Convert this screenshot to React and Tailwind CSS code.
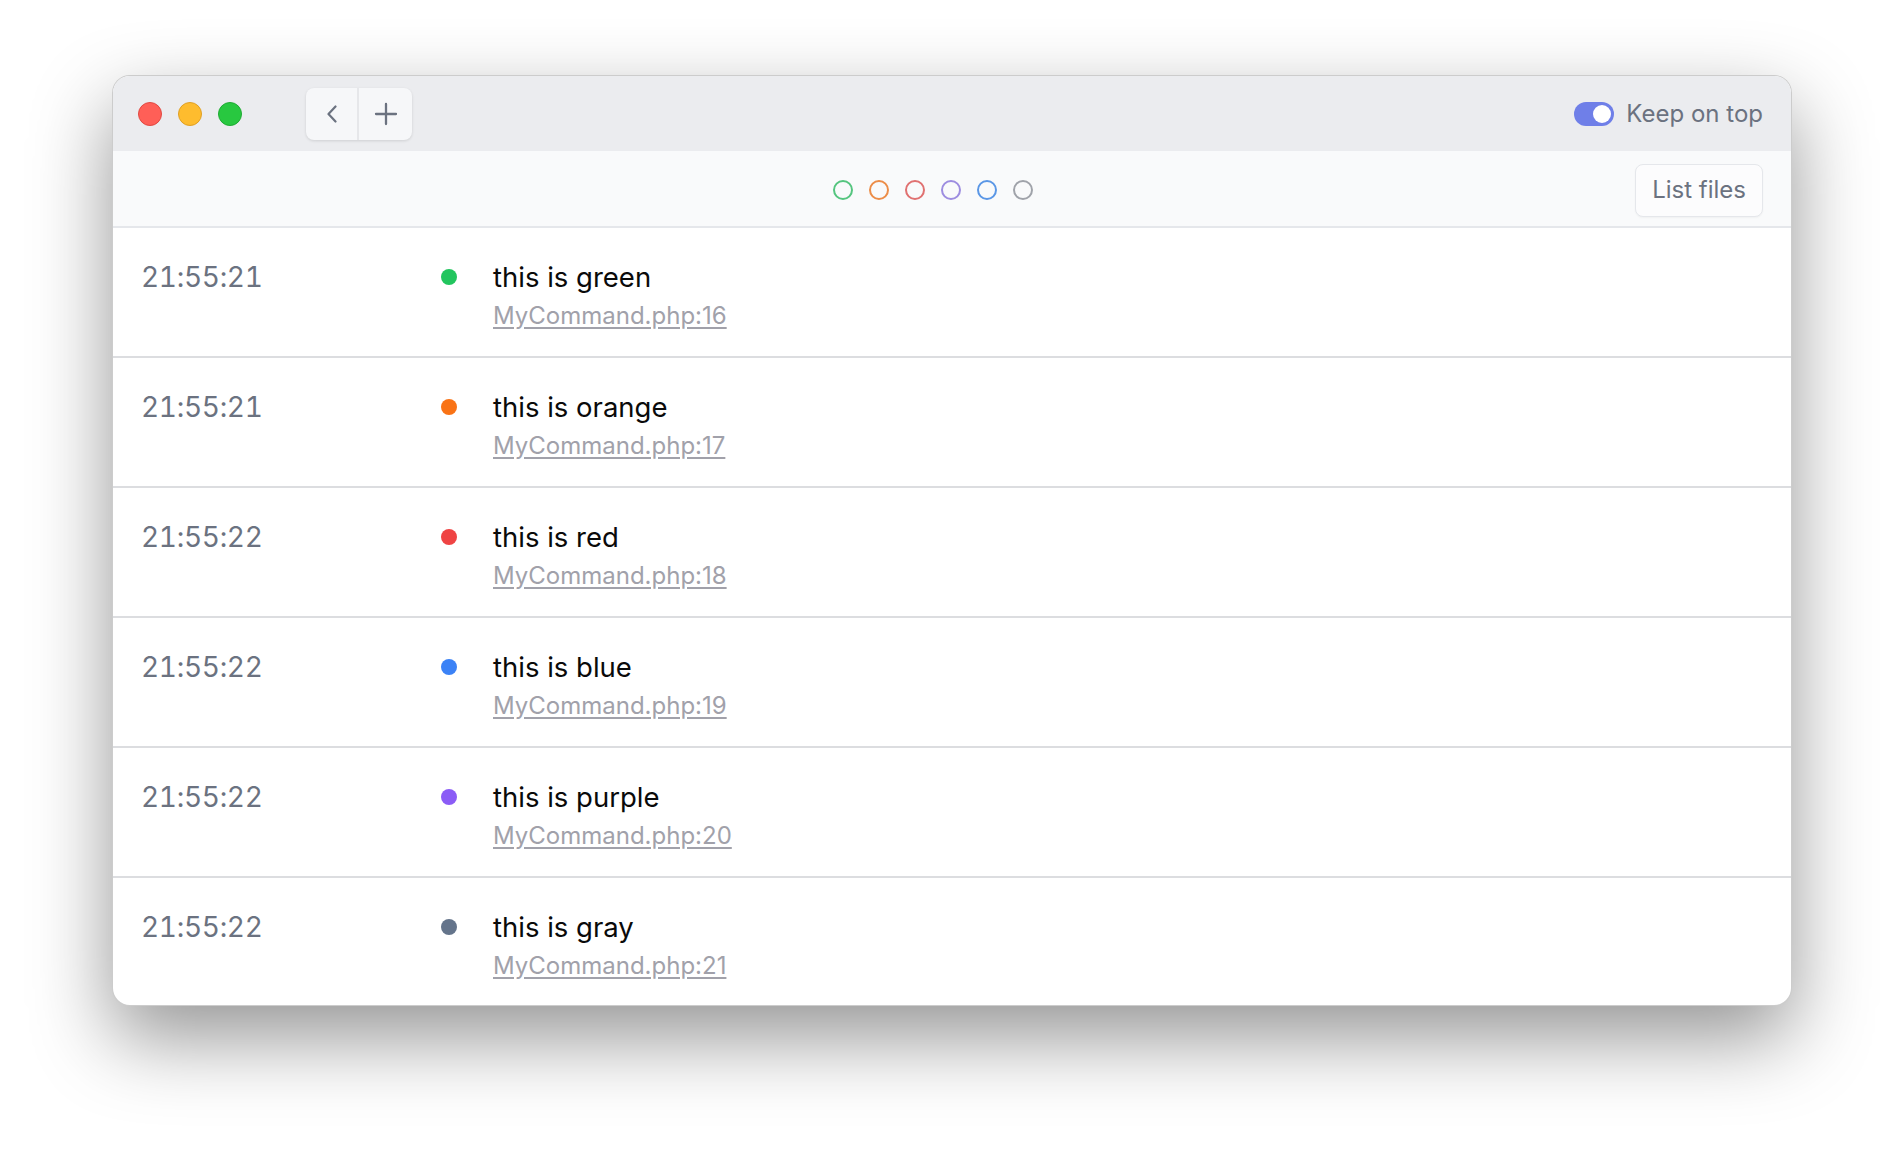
import React from "react";

const rows = [
  { time: "21:55:21", color: "bg-[#22c55e]", text: "this is green", file: "MyCommand.php:16" },
  { time: "21:55:21", color: "bg-[#f97316]", text: "this is orange", file: "MyCommand.php:17" },
  { time: "21:55:22", color: "bg-[#ef4444]", text: "this is red", file: "MyCommand.php:18" },
  { time: "21:55:22", color: "bg-[#3b82f6]", text: "this is blue", file: "MyCommand.php:19" },
  { time: "21:55:22", color: "bg-[#8b5cf6]", text: "this is purple", file: "MyCommand.php:20" },
  { time: "21:55:22", color: "bg-[#64748b]", text: "this is gray", file: "MyCommand.php:21" },
];

const filters = [
  "border-[#55c57f]",
  "border-[#ec8d48]",
  "border-[#e07171]",
  "border-[#9d8de0]",
  "border-[#5b97e6]",
  "border-[#a0a3aa]",
];

const App = () => {
  return (
    <div
      className="min-h-screen bg-white pt-[75px] px-[112px] pb-[148px]"
      style={{ fontFamily: "Inter, 'Noto Sans', sans-serif" }}
    >
      <div className="w-[1680px] rounded-[18px] overflow-hidden bg-white border border-black/20 shadow-[0_32px_80px_rgba(0,0,0,0.42)]">
        {/* Title bar */}
        <div className="h-[75px] bg-[#ebecef] flex items-center pl-[25px] pr-7">
          <div className="flex items-center gap-4">
            <span className="w-6 h-6 rounded-full bg-[#ff5f57] border border-[#e14942]" />
            <span className="w-6 h-6 rounded-full bg-[#febc2e] border border-[#e0a024]" />
            <span className="w-6 h-6 rounded-full bg-[#28c840] border border-[#1fab33]" />
          </div>
          <div className="ml-[64px] flex h-[52px] rounded-lg bg-[#f6f7f9] shadow-[0_1px_3px_rgba(0,0,0,0.12)]">
            <button className="w-[53px] flex items-center justify-center border-r-2 border-[#e6e7ea]">
              <svg width="14" height="18" viewBox="0 0 14 18" fill="none" stroke="#6b7280" strokeWidth="2.2" strokeLinecap="round" strokeLinejoin="round">
                <path d="M10.5 1.5 3.5 9l7 7.5" />
              </svg>
            </button>
            <button className="w-[53px] flex items-center justify-center">
              <svg width="24" height="24" viewBox="0 0 24 24" fill="none" stroke="#6b7280" strokeWidth="2.3" strokeLinecap="round">
                <path d="M12 2v20M2 12h20" />
              </svg>
            </button>
          </div>
          <div className="ml-auto flex items-center gap-3">
            <div className="w-10 h-6 rounded-full bg-[#6f7fe8] flex items-center justify-end px-[3px]">
              <span className="w-[18px] h-[18px] rounded-full bg-white" />
            </div>
            <span className="text-[24px] text-[#6b7280]">Keep on top</span>
          </div>
        </div>

        {/* Toolbar */}
        <div className="h-[77px] pt-[3px] bg-[#f9fafb] border-b-2 border-[#e5e7eb] flex items-center px-7">
          <div className="ml-[692px] flex items-center gap-4">
            {filters.map((c, i) => (
              <span key={i} className={`w-5 h-5 rounded-full border-2 ${c}`} />
            ))}
          </div>
          <button className="ml-auto h-[53px] px-4 rounded-lg border border-[#e5e7eb] bg-[#fcfcfd] text-[24px] text-[#6b7280] shadow-[0_1px_2px_rgba(0,0,0,0.04)]">
            List files
          </button>
        </div>

        {/* Log rows */}
        <div>
          {rows.map((row, i) => (
            <div
              key={i}
              className={`flex pt-[29px] pl-[28px] ${
                i < rows.length - 1 ? "pb-[22px] border-b-2 border-[#dcdde0]" : "pb-[21px]"
              }`}
            >
              <div className="w-[300px] text-[28px] leading-[40px] text-[#6b7280] tabular-nums tracking-[-0.3px]">
                {row.time}
              </div>
              <div className="w-[52px] h-[40px] flex items-center">
                <span className={`w-4 h-4 rounded-full ${row.color}`} />
              </div>
              <div className="flex flex-col">
                <span className="text-[27.5px] leading-[40px] text-[#0a0a0a]">{row.text}</span>
                <a className="text-[24px] leading-[36px] mt-[1px] text-[#a1a1aa] underline underline-offset-[3px] w-fit">
                  {row.file}
                </a>
              </div>
            </div>
          ))}
        </div>
      </div>
    </div>
  );
};

export default App;
